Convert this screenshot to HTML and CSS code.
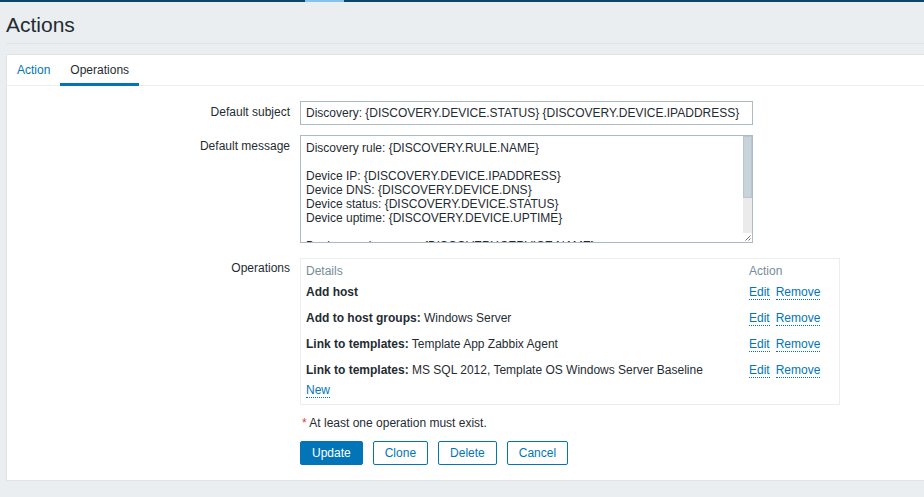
FILE: index.html
```html
<!DOCTYPE html>
<html>
<head>
<meta charset="utf-8">
<link rel="stylesheet" href="styles.css">
</head>
<body>
<div class="topbar"><div class="topbar-mark"></div></div>
<div class="header"><h1 class="title">Actions</h1></div>
<div class="card">
  <ul class="tabs">
    <li class="tab"><a class="tab-link">Action</a></li>
    <li class="tab tab-active"><a class="tab-link">Operations</a></li>
  </ul>
  <div class="form">
    <div class="form-row">
      <label class="form-label">Default subject</label>
      <div class="form-field"><input class="input" type="text" value="Discovery: {DISCOVERY.DEVICE.STATUS} {DISCOVERY.DEVICE.IPADDRESS}"></div>
    </div>
    <div class="form-row">
      <label class="form-label">Default message</label>
      <div class="form-field">
        <div class="textarea-wrap">
          <textarea class="textarea">Discovery rule: {DISCOVERY.RULE.NAME}

Device IP: {DISCOVERY.DEVICE.IPADDRESS}
Device DNS: {DISCOVERY.DEVICE.DNS}
Device status: {DISCOVERY.DEVICE.STATUS}
Device uptime: {DISCOVERY.DEVICE.UPTIME}

Device service name: {DISCOVERY.SERVICE.NAME}
Device service port: {DISCOVERY.SERVICE.PORT}
Device service status: {DISCOVERY.SERVICE.STATUS}
Device service uptime: {DISCOVERY.SERVICE.UPTIME}</textarea>
          <div class="fake-scroll"><div class="fake-thumb"></div></div>
          <div class="fake-resizer">
            <svg width="9" height="9" viewBox="0 0 9 9"><path d="M7.5 2.5 L2.5 7.5 M7.5 5.5 L5.5 7.5" stroke="#6b7780" stroke-width="1" fill="none"/></svg>
          </div>
        </div>
      </div>
    </div>
    <div class="form-row form-row-ops">
      <label class="form-label form-label-ops">Operations</label>
      <div class="form-field">
        <div class="ops-box">
          <table class="ops-table">
            <thead>
              <tr><th class="col-details">Details</th><th class="col-action">Action</th></tr>
            </thead>
            <tbody>
              <tr><td><b>Add host</b></td><td><a class="link">Edit</a><a class="link link-gap">Remove</a></td></tr>
              <tr><td><b>Add to host groups:</b> Windows Server</td><td><a class="link">Edit</a><a class="link link-gap">Remove</a></td></tr>
              <tr><td><b>Link to templates:</b> Template App Zabbix Agent</td><td><a class="link">Edit</a><a class="link link-gap">Remove</a></td></tr>
              <tr><td><b>Link to templates:</b> MS SQL 2012, Template OS Windows Server Baseline</td><td><a class="link">Edit</a><a class="link link-gap">Remove</a></td></tr>
            </tbody>
          </table>
          <div class="ops-new"><a class="link">New</a></div>
        </div>
      </div>
    </div>
    <div class="form-row form-row-note">
      <div class="form-label"></div>
      <div class="form-field note"><span class="asterisk">*</span> At least one operation must exist.</div>
    </div>
    <div class="form-row form-row-buttons">
      <div class="form-label"></div>
      <div class="form-field buttons">
        <button class="btn btn-main">Update</button>
        <button class="btn btn-alt">Clone</button>
        <button class="btn btn-alt">Delete</button>
        <button class="btn btn-alt">Cancel</button>
      </div>
    </div>
  </div>
</div>
</body>
</html>
```
FILE: styles.css
```css
html, body {
  margin: 0;
  padding: 0;
}
body {
  background: #ebeef0;
  font-family: "Liberation Sans", Arial, sans-serif;
  font-size: 12px;
  line-height: 14px;
  color: #1f2c33;
  overflow: hidden;
  height: 497px;
}
.topbar {
  height: 2px;
  background: #0a466a;
}
.topbar-mark {
  margin-left: 305px;
  width: 39px;
  height: 2px;
  background: #84c3ee;
}
.header {
  margin-left: 6px;
  height: 30px;
  padding-top: 11px;
  border-bottom: 1px solid #dfe4e7;
}
.title {
  margin: 0;
  font-size: 21px;
  line-height: 24px;
  font-weight: normal;
  color: #1f2c33;
}
.card {
  margin: 10px 0 0 6px;
  background: #fff;
  border: 1px solid #dfe4e7;
  border-right: none;
  padding-bottom: 15px;
}
.tabs {
  list-style: none;
  margin: 0;
  padding: 0;
  display: flex;
  border-bottom: 1px solid #ebeef0;
}
.tab {
  margin-bottom: -1px;
  border-bottom: 3px solid transparent;
}
.tab-link {
  display: block;
  padding: 0 10px;
  line-height: 30px;
  height: 28px;
  color: #0275b8;
}
.tab-active {
  border-bottom-color: #0275b8;
}
.tab-active .tab-link {
  color: #1f2c33;
}
.form {
  padding-top: 15px;
}
.form-row {
  display: flex;
  margin-bottom: 10px;
}
.form-label {
  width: 283px;
  flex: none;
  text-align: right;
  padding-top: 4px;
  margin-right: 10px;
}
.form-label-ops {
  padding-top: 3px;
}
.form-row-ops {
  margin-top: 15px;
}
.input {
  box-sizing: border-box;
  width: 453px;
  height: 24px;
  border: 1px solid #acbbc2;
  padding: 0 5px;
  font-family: inherit;
  font-size: 12px;
  color: #1f2c33;
  margin: 0;
  outline: none;
}
.textarea-wrap {
  position: relative;
  width: 453px;
  height: 108px;
}
.textarea {
  display: block;
  box-sizing: border-box;
  width: 453px;
  height: 108px;
  border: 1px solid #acbbc2;
  padding: 5px 15px 5px 5px;
  margin: 0;
  font-family: inherit;
  font-size: 12px;
  line-height: 14px;
  color: #1f2c33;
  resize: none;
  overflow: hidden;
  outline: none;
}
.fake-scroll {
  position: absolute;
  top: 1px;
  right: 1px;
  bottom: 10px;
  width: 9px;
  background: #ebebeb;
}
.fake-thumb {
  box-sizing: border-box;
  height: 62px;
  background: #c8d3da;
  border: 1px solid #b9c6ce;
}
.fake-resizer {
  position: absolute;
  right: 1px;
  bottom: 1px;
  width: 9px;
  height: 9px;
  background: #fff;
  line-height: 0;
}
.ops-box {
  box-sizing: border-box;
  width: 540px;
  border: 1px solid #ebeef0;
  padding: 0 5px 7px;
}
.ops-table {
  width: 100%;
  border-collapse: collapse;
}
.ops-table th {
  font-weight: normal;
  color: #768d99;
  text-align: left;
  padding: 5px 0 3px;
}
.ops-table td {
  padding: 4px 0;
  vertical-align: top;
}
.ops-table tbody tr + tr td {
  padding-top: 8px;
}
.col-action {
  width: 85px;
}
.ops-new {
  margin-top: 2px;
}
.link {
  color: #0275b8;
  border-bottom: 1px dotted #0275b8;
  cursor: pointer;
}
.link-gap {
  margin-left: 6px;
}
.form-row-note {
  margin-bottom: 11px;
}
.note {
  padding-top: 1px;
  padding-left: 2px;
}
.asterisk {
  color: #e33734;
}
.form-row-buttons {
  margin-bottom: 0;
}
.buttons {
  display: flex;
  gap: 10px;
}
.btn {
  box-sizing: border-box;
  height: 24px;
  padding: 0 11px;
  border: 1px solid #0275b8;
  border-radius: 2px;
  font-family: inherit;
  font-size: 12px;
  line-height: 22px;
  margin: 0;
  cursor: pointer;
}
.btn-main {
  background: #0275b8;
  color: #fff;
}
.btn-alt {
  background: #fff;
  color: #0275b8;
}
```
